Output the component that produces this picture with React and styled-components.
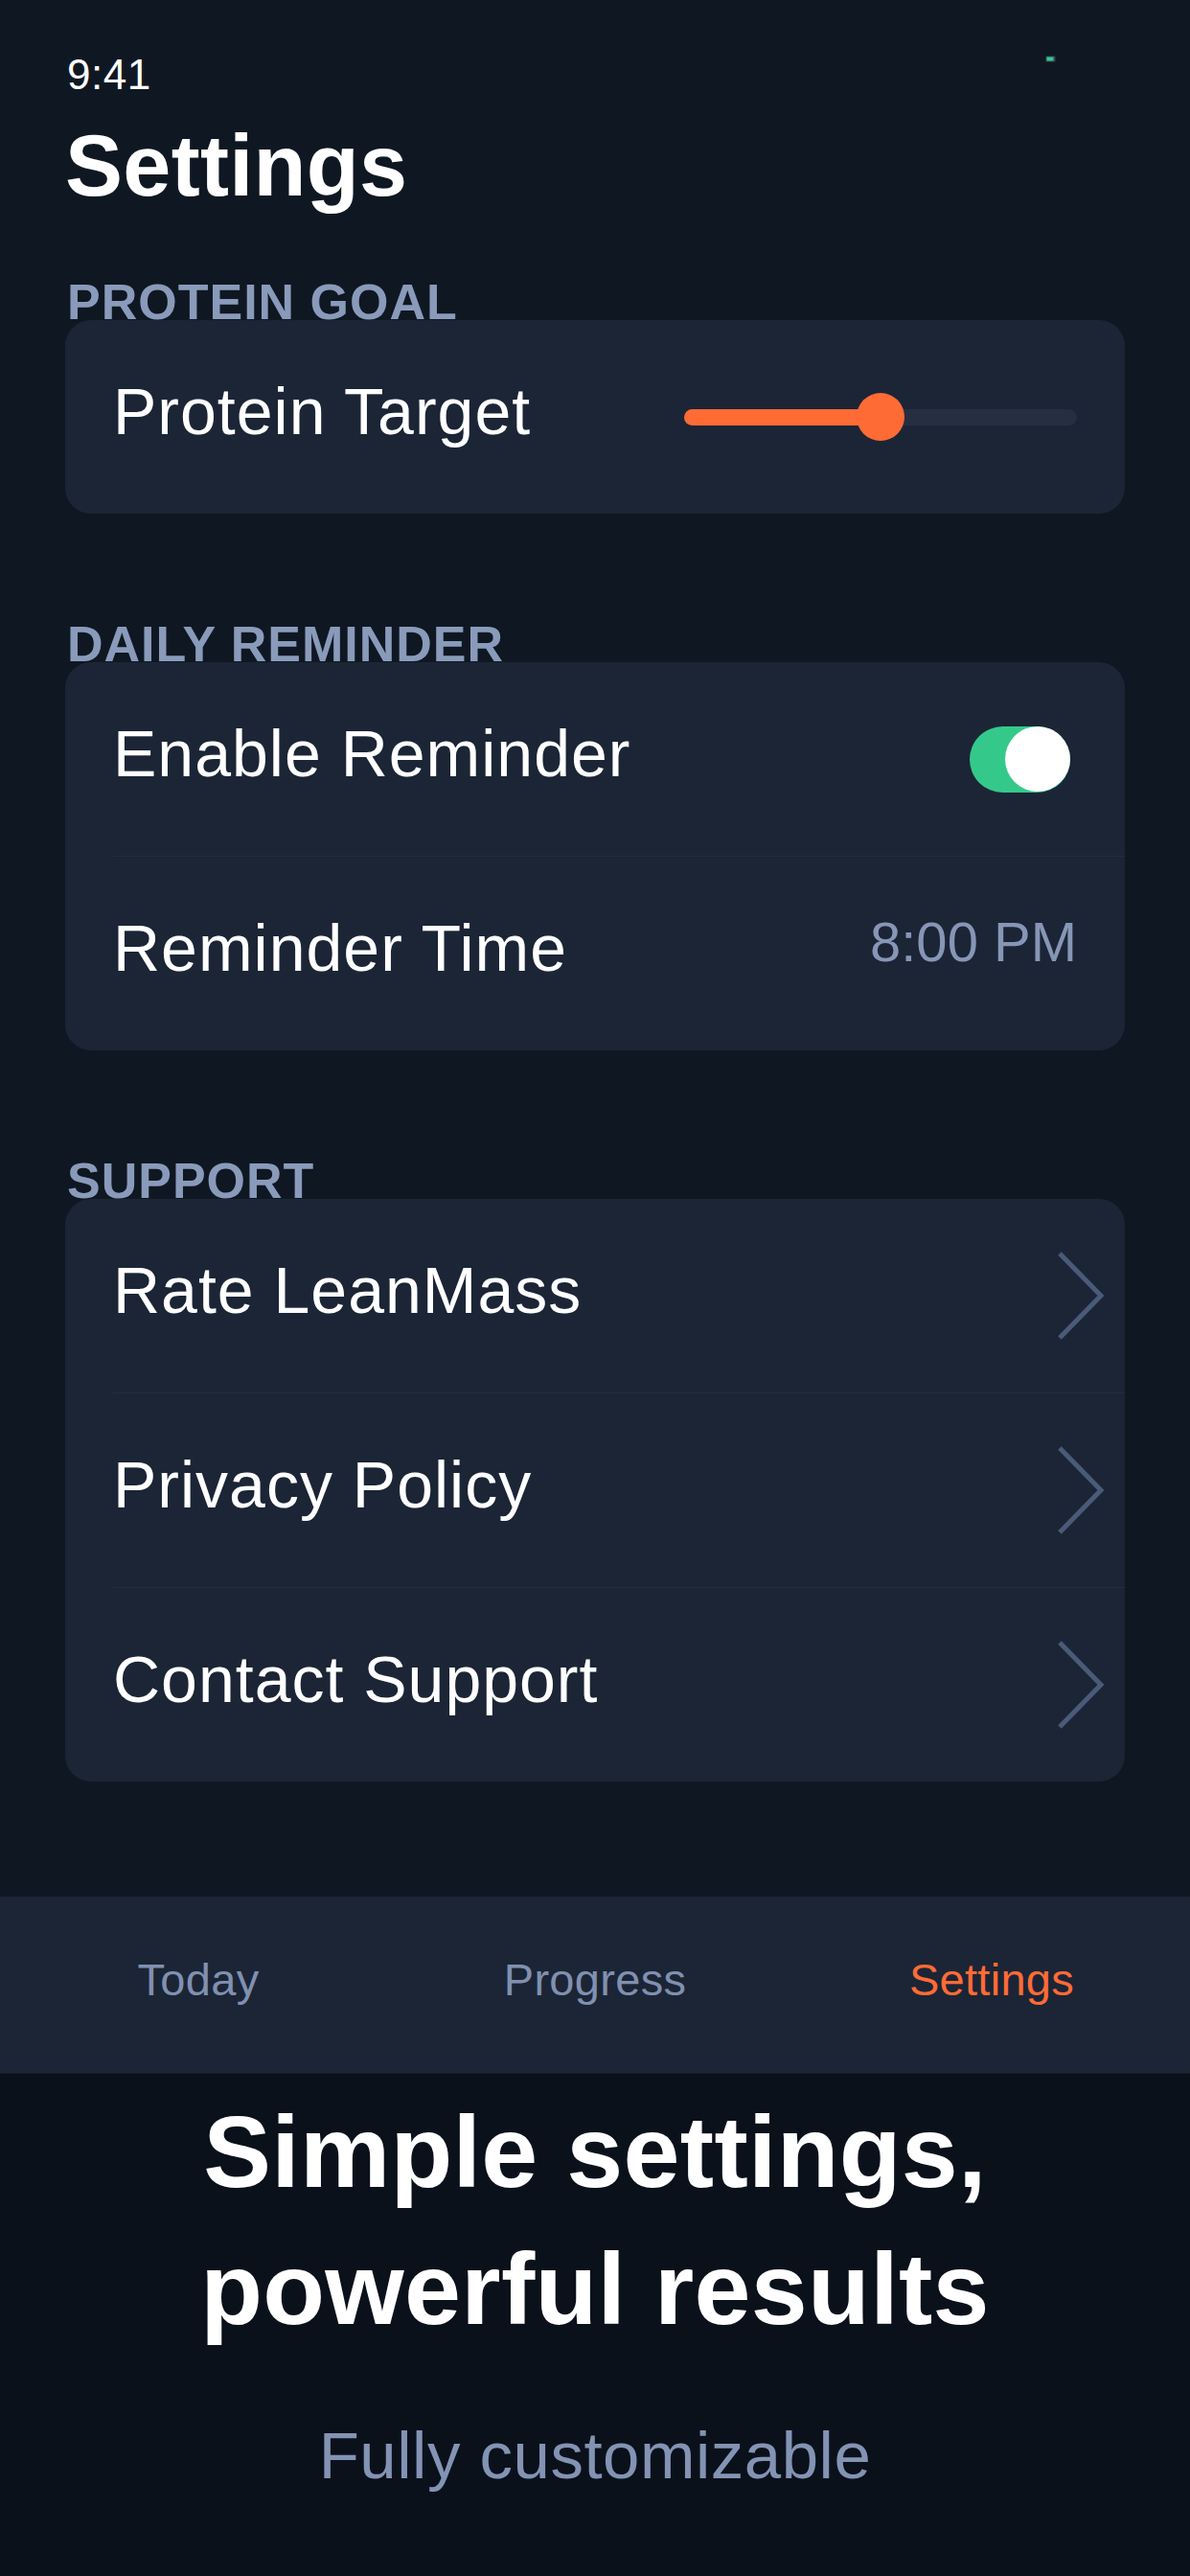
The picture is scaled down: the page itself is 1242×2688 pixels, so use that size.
import React, { useState } from 'react';
import styled, { createGlobalStyle } from 'styled-components';

const GlobalStyle = createGlobalStyle`
  * {
    box-sizing: border-box;
  }
  body {
    margin: 0;
    background-color: #0b111b;
    font-family: "Liberation Sans", Arial, sans-serif;
    -webkit-font-smoothing: antialiased;
  }
`;

const Page = styled.div`
  width: 1242px;
  min-height: 2688px;
  display: flex;
  flex-direction: column;
  background-color: #0b111b;
`;

const Screen = styled.div`
  height: 2164px;
  display: flex;
  flex-direction: column;
  background-color: #0f1822;
`;

const Content = styled.div`
  padding: 56px 68px 0;
`;

const StatusBar = styled.div`
  height: 44px;
  display: flex;
  justify-content: space-between;
  align-items: flex-start;
  padding-right: 71px;
`;

const Time = styled.span`
  color: #ffffff;
  font-size: 44px;
  line-height: 44px;
  padding-left: 2px;
  letter-spacing: 0.5px;
`;

const Battery = styled.svg`
  margin-top: 2px;
`;

const Title = styled.h1`
  margin: 28px 0 0;
  color: #ffffff;
  font-size: 90px;
  line-height: 90px;
  font-weight: 700;
  letter-spacing: 0.3px;
`;

const Sections = styled.div`
  display: flex;
  flex-direction: column;
  gap: 118px;
  margin-top: 79px;
`;

const Section = styled.section`
  display: flex;
  flex-direction: column;
`;

const SectionLabel = styled.h2`
  margin: 0;
  padding-left: 2px;
  color: #8a9aba;
  font-size: 52px;
  line-height: 37px;
  font-weight: 700;
  letter-spacing: 1px;
  text-transform: uppercase;
`;

const Card = styled.div`
  background-color: #1b2536;
  border-radius: 27px;
  overflow: hidden;
`;

const Row = styled.div`
  min-height: 202px;
  display: flex;
  align-items: center;
  justify-content: space-between;
  padding: 0 ${p => (p.$tight ? '21px' : '50px')} 0 50px;
`;

const Divider = styled.div`
  height: 1px;
  margin-left: 50px;
  background-color: #222c3d;
`;

const RowLabel = styled.span`
  color: #ffffff;
  font-size: 68px;
  line-height: 80px;
  letter-spacing: 1px;
  margin-bottom: 13px;
`;

const RowValue = styled.span`
  color: #8796b6;
  font-size: 58px;
  line-height: 68px;
  margin-bottom: 25px;
`;

const SliderTrack = styled.div`
  position: relative;
  width: 410px;
  height: 17px;
  border-radius: 9px;
  background-color: #262f42;
`;

const SliderFill = styled.div`
  position: absolute;
  left: 0;
  top: 0;
  bottom: 0;
  border-radius: 9px;
  background-color: #ff6b35;
`;

const SliderThumb = styled.div`
  position: absolute;
  top: 50%;
  width: 50px;
  height: 50px;
  border-radius: 50%;
  background-color: #ff6b35;
  transform: translate(-50%, -50%);
`;

const Toggle = styled.button`
  width: 105px;
  height: 69px;
  margin-right: 7px;
  padding: 0;
  border: none;
  border-radius: 35px;
  background-color: ${p => (p.$on ? '#34c98b' : '#3a4456')};
  display: flex;
  justify-content: ${p => (p.$on ? 'flex-end' : 'flex-start')};
  align-items: center;
  cursor: pointer;
`;

const Knob = styled.span`
  width: 68px;
  height: 68px;
  border-radius: 50%;
  background-color: #ffffff;
`;

const Chevron = () => (
  <svg width="50" height="96" viewBox="0 0 50 96">
    <polyline
      points="3,4 46,48 3,92"
      fill="none"
      stroke="#4a5a78"
      strokeWidth="5"
      strokeLinejoin="miter"
    />
  </svg>
);

const TabBar = styled.nav`
  margin-top: auto;
  height: 185px;
  display: grid;
  grid-template-columns: repeat(3, 1fr);
  align-items: center;
  background-color: #1b2536;
  border-bottom: 1px solid #141c29;
`;

const Tab = styled.span`
  text-align: center;
  font-size: 47px;
  line-height: 56px;
  letter-spacing: 0.3px;
  margin-bottom: 10px;
  color: ${p => (p.$active ? '#ff6b35' : '#8190b0')};
`;

const Promo = styled.div`
  flex: 1;
  padding-top: 10px;
  text-align: center;
`;

const Headline = styled.h2`
  margin: 0;
  color: #ffffff;
  font-size: 106px;
  line-height: 143px;
  font-weight: 700;
  letter-spacing: 0.3px;
`;

const Subline = styled.p`
  margin: 61px 0 0;
  color: #8393b4;
  font-size: 69px;
  line-height: 83px;
  letter-spacing: 0.5px;
`;

const App = () => {
    const [reminder, setReminder] = useState(true);
    const protein = 0.5;

    return (
        <Page>
            <GlobalStyle />
            <Screen>
                <Content>
                    <StatusBar>
                        <Time>9:41</Time>
                        <Battery width="12" height="7" viewBox="0 0 12 7">
                            <rect x="0.5" y="0.5" width="10" height="6" rx="1" fill="#3a4456" />
                            <rect x="1.5" y="1.5" width="7" height="4" fill="#34c98b" />
                        </Battery>
                    </StatusBar>

                    <Title>Settings</Title>

                    <Sections>
                        <Section>
                            <SectionLabel>Protein Goal</SectionLabel>
                            <Card>
                                <Row>
                                    <RowLabel>Protein Target</RowLabel>
                                    <SliderTrack>
                                        <SliderFill style={{ width: `${protein * 100}%` }} />
                                        <SliderThumb style={{ left: `${protein * 100}%` }} />
                                    </SliderTrack>
                                </Row>
                            </Card>
                        </Section>

                        <Section>
                            <SectionLabel>Daily Reminder</SectionLabel>
                            <Card>
                                <Row>
                                    <RowLabel>Enable Reminder</RowLabel>
                                    <Toggle $on={reminder} onClick={() => setReminder(r => !r)}>
                                        <Knob />
                                    </Toggle>
                                </Row>
                                <Divider />
                                <Row>
                                    <RowLabel>Reminder Time</RowLabel>
                                    <RowValue>8:00 PM</RowValue>
                                </Row>
                            </Card>
                        </Section>

                        <Section>
                            <SectionLabel>Support</SectionLabel>
                            <Card>
                                <Row $tight>
                                    <RowLabel>Rate LeanMass</RowLabel>
                                    <Chevron />
                                </Row>
                                <Divider />
                                <Row $tight>
                                    <RowLabel>Privacy Policy</RowLabel>
                                    <Chevron />
                                </Row>
                                <Divider />
                                <Row $tight>
                                    <RowLabel>Contact Support</RowLabel>
                                    <Chevron />
                                </Row>
                            </Card>
                        </Section>
                    </Sections>
                </Content>

                <TabBar>
                    <Tab>Today</Tab>
                    <Tab>Progress</Tab>
                    <Tab $active>Settings</Tab>
                </TabBar>
            </Screen>

            <Promo>
                <Headline>
                    Simple settings,
                    <br />
                    powerful results
                </Headline>
                <Subline>Fully customizable</Subline>
            </Promo>
        </Page>
    );
};

export default App;
